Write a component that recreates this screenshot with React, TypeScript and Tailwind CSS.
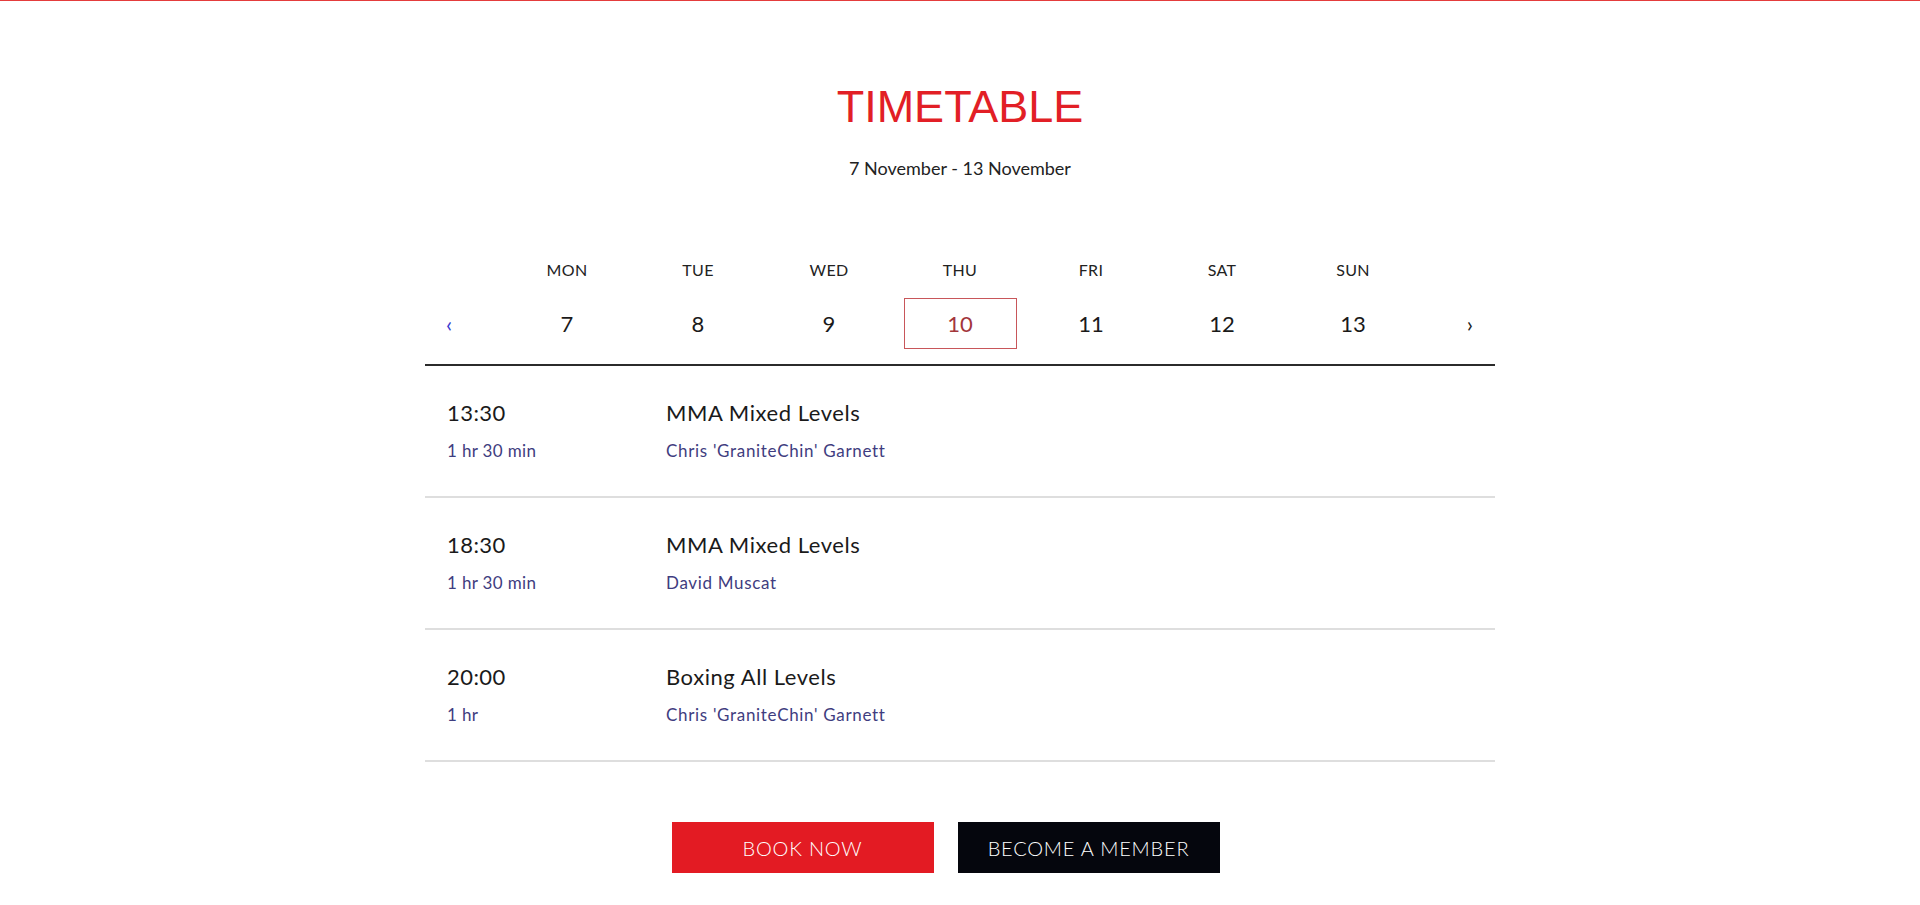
import React from 'react';

const days = [
  { name: 'MON', date: 7 },
  { name: 'TUE', date: 8 },
  { name: 'WED', date: 9 },
  { name: 'THU', date: 10 },
  { name: 'FRI', date: 11 },
  { name: 'SAT', date: 12 },
  { name: 'SUN', date: 13 },
];

const sessions = [
  { time: '13:30', duration: '1 hr 30 min', title: 'MMA Mixed Levels', coach: "Chris 'GraniteChin' Garnett" },
  { time: '18:30', duration: '1 hr 30 min', title: 'MMA Mixed Levels', coach: 'David Muscat' },
  { time: '20:00', duration: '1 hr', title: 'Boxing All Levels', coach: "Chris 'GraniteChin' Garnett" },
];

const SELECTED = 10;

export default function App() {
  return (
    <div className="min-h-[905px] bg-white border-t border-[#e43c3c] font-['Lato','Open_Sans',sans-serif] text-[#1f1f1f]">
      <h1 className="mt-[83px] text-center text-[45px] leading-none text-[#e21f26] font-['Liberation_Sans',Arial,sans-serif]">
        TIMETABLE
      </h1>
      <p className="mt-[27px] text-center text-[18px] leading-[24px] text-[#222]">7 November - 13 November</p>

      <div className="mx-auto mt-[80px] w-[1070px]">
        <div className="border-b-2 border-[#2b2b2b] pb-[15px]">
          <div className="grid grid-cols-[1fr_repeat(7,131px)_1fr]">
            <div />
            {days.map((d) => (
              <div key={d.name} className="text-center text-[16px] leading-[20px] tracking-[0.02em] text-[#222]">
                {d.name}
              </div>
            ))}
            <div />
          </div>
          <div className="mt-[18px] grid grid-cols-[1fr_repeat(7,131px)_1fr] items-center">
            <button className="justify-self-start pl-[21px] text-[22px] leading-none text-[#3b3bd0]">‹</button>
            {days.map((d) => (
              <div key={d.date} className="flex justify-center">
                {d.date === SELECTED ? (
                  <div className="flex h-[51px] w-[113px] items-center justify-center border border-[#c8565a] text-[22px] text-[#a3363b]">
                    {d.date}
                  </div>
                ) : (
                  <div className="flex h-[51px] items-center justify-center text-[22px] text-[#1a1a1a]">{d.date}</div>
                )}
              </div>
            ))}
            <button className="justify-self-end pr-[22px] text-[22px] leading-none text-[#222]">›</button>
          </div>
        </div>

        {sessions.map((s, i) => (
          <div key={i} className="grid grid-cols-[241px_1fr] border-b-2 border-[#dedede] pt-[33px] pb-[33px]">
            <div className="pl-[22px]">
              <div className="text-[22px] leading-[28px] tracking-[0.02em] text-[#1a1a1a]">{s.time}</div>
              <div className="mt-[12px] text-[17px] leading-[24px] tracking-[0.02em] text-[#3f3d80]">{s.duration}</div>
            </div>
            <div>
              <div className="text-[22px] leading-[28px] tracking-[0.025em] text-[#1a1a1a]">{s.title}</div>
              <div className="mt-[12px] text-[17px] leading-[24px] tracking-[0.04em] text-[#3f3d80]">{s.coach}</div>
            </div>
          </div>
        ))}
      </div>

      <div className="mt-[60px] flex justify-center gap-[24px] pr-[29px]">
        <button className="h-[51px] w-[262px] bg-[#e31b23] text-[20px] font-light tracking-[0.04em] text-white">BOOK NOW</button>
        <button className="h-[51px] w-[262px] bg-[#05060d] text-[20px] font-light tracking-[0.04em] text-white">BECOME A MEMBER</button>
      </div>
    </div>
  );
}
